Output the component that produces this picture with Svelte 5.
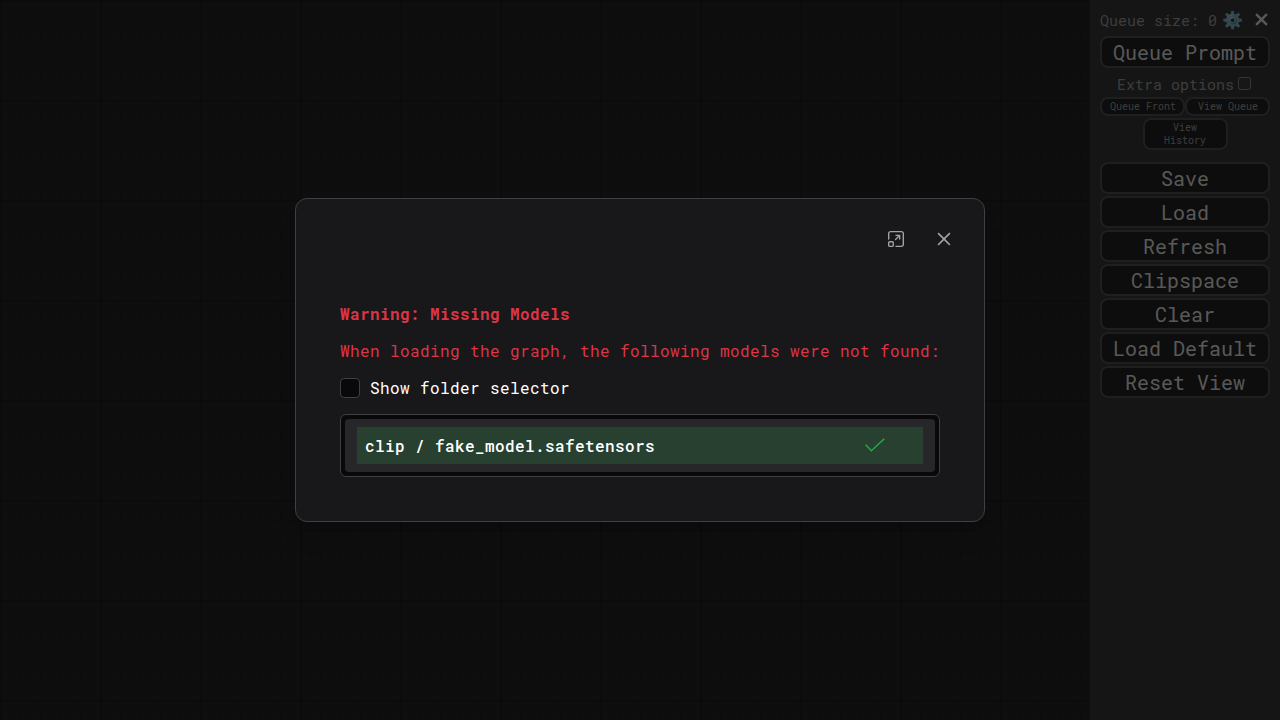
<script>
  const actions = ['Save', 'Load', 'Refresh', 'Clipspace', 'Clear', 'Load Default', 'Reset View'];
</script>

<main class="app">
  <div class="canvas"></div>
  <aside class="menu">
    <header class="status">
      <span class="queue-size">Queue size: 0</span>
      <span class="gear">⚙️</span>
      <svg class="menu-close" width="13" height="13" viewBox="0 0 12 12"><path d="M1 1 L11 11 M11 1 L1 11" /></svg>
    </header>
    <button class="big">Queue Prompt</button>
    <label class="extra">Extra options<span class="box"></span></label>
    <div class="pair">
      <button class="small">Queue Front</button>
      <button class="small">View Queue</button>
    </div>
    <button class="small history">View History</button>
    <div class="actions">
      {#each actions as action}
        <button class="big">{action}</button>
      {/each}
    </div>
  </aside>

  <div class="mask">
    <section class="dialog" role="dialog" aria-label="Missing models">
      <div class="tools">
        <svg width="16" height="16" viewBox="0 0 14 14" fill="none">
          <path fill-rule="evenodd" clip-rule="evenodd" fill="currentColor" d="M7 14H11.8C12.3835 14 12.9431 13.7682 13.3556 13.3556C13.7682 12.9431 14 12.3835 14 11.8V2.2C14 1.61652 13.7682 1.05694 13.3556 0.644365C12.9431 0.231785 12.3835 0 11.8 0H2.2C1.61652 0 1.05694 0.231785 0.644365 0.644365C0.231785 1.05694 0 1.61652 0 2.2V7C0 7.15913 0.063214 7.31174 0.175736 7.42426C0.288258 7.53679 0.44087 7.6 0.6 7.6C0.75913 7.6 0.911742 7.53679 1.02426 7.42426C1.13679 7.31174 1.2 7.15913 1.2 7V2.2C1.2 1.93478 1.30536 1.68043 1.49289 1.49289C1.68043 1.30536 1.93478 1.2 2.2 1.2H11.8C12.0652 1.2 12.3196 1.30536 12.5071 1.49289C12.6946 1.68043 12.8 1.93478 12.8 2.2V11.8C12.8 12.0652 12.6946 12.3196 12.5071 12.5071C12.3196 12.6946 12.0652 12.8 11.8 12.8H7C6.84087 12.8 6.68826 12.8632 6.57574 12.9757C6.46321 13.0883 6.4 13.2409 6.4 13.4C6.4 13.5591 6.46321 13.7117 6.57574 13.8243C6.68826 13.9368 6.84087 14 7 14ZM9.77805 7.42192C9.89013 7.534 10.0415 7.59788 10.2 7.59995C10.3585 7.59788 10.5099 7.534 10.622 7.42192C10.7341 7.30985 10.798 7.15844 10.8 6.99995V3.94242C10.8066 3.90505 10.8096 3.86689 10.8089 3.82843C10.8079 3.77159 10.7988 3.7157 10.7824 3.6623C10.756 3.55552 10.701 3.45698 10.622 3.37798C10.5099 3.2659 10.3585 3.20202 10.2 3.19995H7.00002C6.84089 3.19995 6.68828 3.26317 6.57576 3.37569C6.46324 3.48821 6.40002 3.64082 6.40002 3.79995C6.40002 3.95908 6.46324 4.11169 6.57576 4.22422C6.68828 4.33674 6.84089 4.39995 7.00002 4.39995H8.80006L6.19997 7.00005C6.10158 7.11005 6.04718 7.25246 6.04718 7.40005C6.04718 7.54763 6.10158 7.69004 6.19997 7.80005C6.30202 7.91645 6.44561 7.98824 6.59997 8.00005C6.75432 7.98824 6.89791 7.91645 6.99997 7.80005L9.60002 5.26841V6.99995C9.6021 7.15844 9.66598 7.30985 9.77805 7.42192ZM1.4 14H3.8C4.17066 13.9979 4.52553 13.8498 4.78763 13.5877C5.04973 13.3256 5.1979 12.9707 5.2 12.6V10.2C5.1979 9.82939 5.04973 9.47452 4.78763 9.21242C4.52553 8.95032 4.17066 8.80215 3.8 8.80005H1.4C1.02934 8.80215 0.674468 8.95032 0.412371 9.21242C0.150274 9.47452 0.00210008 9.82939 0 10.2V12.6C0.00210008 12.9707 0.150274 13.3256 0.412371 13.5877C0.674468 13.8498 1.02934 13.9979 1.4 14ZM1.25858 10.0586C1.29609 10.0211 1.34696 10 1.4 10H3.8C3.85304 10 3.90391 10.0211 3.94142 10.0586C3.97893 10.0961 4 10.147 4 10.2V12.6C4 12.6531 3.97893 12.704 3.94142 12.7415C3.90391 12.779 3.85304 12.8 3.8 12.8H1.4C1.34696 12.8 1.29609 12.779 1.25858 12.7415C1.22107 12.704 1.2 12.6531 1.2 12.6V10.2C1.2 10.147 1.22107 10.0961 1.25858 10.0586Z" />
        </svg>
        <svg width="16" height="16" viewBox="0 0 14 14" fill="none">
          <path fill="currentColor" d="M8.01186 7.00933L12.27 2.75116C12.341 2.68501 12.398 2.60524 12.4375 2.51661C12.4769 2.42798 12.4982 2.3323 12.4999 2.23529C12.5016 2.13827 12.4838 2.0419 12.4474 1.95194C12.4111 1.86197 12.357 1.78024 12.2884 1.71163C12.2198 1.64302 12.138 1.58893 12.0481 1.55259C11.9581 1.51625 11.8617 1.4984 11.7647 1.50011C11.6677 1.50182 11.572 1.52306 11.4834 1.56255C11.3948 1.60204 11.315 1.65898 11.2488 1.72997L6.99067 5.98814L2.7325 1.72997C2.59553 1.60234 2.41437 1.53286 2.22718 1.53616C2.03999 1.53946 1.8614 1.61529 1.72901 1.74767C1.59663 1.88006 1.5208 2.05865 1.5175 2.24584C1.5142 2.43303 1.58368 2.61419 1.71131 2.75116L5.96948 7.00933L1.71131 11.2675C1.576 11.403 1.5 11.5866 1.5 11.7781C1.5 11.9696 1.576 12.1532 1.71131 12.2887C1.84679 12.424 2.03043 12.5 2.2219 12.5C2.41338 12.5 2.59702 12.424 2.7325 12.2887L6.99067 8.03052L11.2488 12.2887C11.3843 12.424 11.568 12.5 11.7594 12.5C11.9509 12.5 12.1346 12.424 12.27 12.2887C12.4053 12.1532 12.4813 11.9696 12.4813 11.7781C12.4813 11.5866 12.4053 11.403 12.27 11.2675L8.01186 7.00933Z" />
        </svg>
      </div>
      <h4>Warning: Missing Models</h4>
      <p>When loading the graph, the following models were not found:</p>
      <label class="folder"><span class="check"></span>Show folder selector</label>
      <div class="listbox">
        <div class="option">
          <div class="model">
            <span>clip / fake_model.safetensors</span>
            <svg width="20" height="14" viewBox="0 0 20 14"><path d="M.7 6.8 L6.4 12.7 L19.3 .7" /></svg>
          </div>
        </div>
      </div>
    </section>
  </div>
</main>

<style>
  :global(body) { background: #222; overflow: hidden; }
  .app {
    display: flex;
    position: relative;
    width: 1280px;
    height: 720px;
    font-family: "Roboto Mono", "DejaVu Sans Mono", monospace;
  }
  .canvas {
    flex: 1;
    background-color: #232323;
    background-image:
      linear-gradient(90deg, #1c1c1c 2px, transparent 2px),
      linear-gradient(#1c1c1c 2px, transparent 2px),
      linear-gradient(90deg, #1f1f1f 1px, transparent 1px),
      linear-gradient(#1f1f1f 1px, transparent 1px);
    background-size: 100px 100px, 100px 100px, 10px 10px, 10px 10px;
  }
  .menu {
    display: flex;
    flex-direction: column;
    align-items: center;
    box-sizing: border-box;
    width: 190px;
    padding: 10px 10px 0;
    background: #353535;
    color: #999;
    font-size: 15px;
  }
  .status { display: flex; align-items: center; width: 170px; height: 20px; margin-bottom: 6px; line-height: 20px; }
  .queue-size { flex: none; width: 118px; white-space: nowrap; }
  .gear { flex: none; width: 27px; margin-left: 4px; font-size: 17px; }
  .menu-close { flex: none; margin: -2px 0 0 6px; fill: none; stroke: #ddd; stroke-width: 2.2; }
  button {
    box-sizing: border-box;
    border: 2px solid #4e4e4e;
    border-radius: 8px;
    padding: 0;
    background: #222;
    color: #ddd;
    font-family: inherit;
  }
  .big { width: 170px; height: 32px; font-size: 20px; line-height: 28px; }
  .extra { display: flex; align-items: center; height: 20px; margin: 6px 2px 0 0; line-height: 20px; }
  .box { box-sizing: border-box; width: 13px; height: 13px; margin: -2px 0 0 4px; border: 1px solid #858585; border-radius: 2.5px; background: #3b3b3b; }
  .pair { display: flex; margin-top: 3px; }
  .small { width: 85px; height: 19px; color: #999; font-size: 10px; line-height: 13px; }
  .pair .small { padding-left: 1px; }
  .history { height: 32px; margin-top: 2px; padding: 0 16px; }
  .actions { display: flex; flex-direction: column; gap: 2px; margin-top: 12px; }
  .mask {
    position: absolute;
    inset: 0;
    display: flex;
    align-items: center;
    justify-content: center;
    background: rgba(0, 0, 0, .6);
  }
  .dialog {
    box-sizing: border-box;
    width: 690px;
    height: 324px;
    padding: 20px 44px 0;
    border: 1px solid #3f3f46;
    border-radius: 12px;
    background: #18181b;
    color: #fff;
    font-size: 16px;
    letter-spacing: .4px;
    box-shadow: 0 20px 25px -5px rgba(0, 0, 0, .1), 0 8px 10px -6px rgba(0, 0, 0, .1);
  }
  .tools { display: flex; justify-content: flex-end; align-items: center; gap: 32px; height: 40px; margin-right: -12px; color: #a1a1aa; }
  h4, p { margin: 0; color: #dc3545; font-size: 16px; line-height: 21px; white-space: nowrap; }
  h4 { margin-top: 44px; font-weight: 700; }
  p { margin-top: 16px; }
  .folder { display: flex; align-items: center; gap: 10px; height: 21px; margin-top: 16px; }
  .check { box-sizing: border-box; width: 20px; height: 20px; border: 1px solid #3f3f46; border-radius: 4px; background: #09090b; }
  .listbox { margin-top: 16px; padding: 4px; border: 1px solid #3f3f46; border-radius: 6px; background: #09090b; }
  .option { padding: 8px 12px; border-radius: 4px; background: #27272a; }
  .model { display: flex; align-items: center; justify-content: space-between; height: 37px; padding: 0 38px 0 8px; background: #28402f; font-weight: 500; }
  .model svg { margin-top: -2px; fill: none; stroke: #28a745; stroke-width: 1.5; }
</style>
